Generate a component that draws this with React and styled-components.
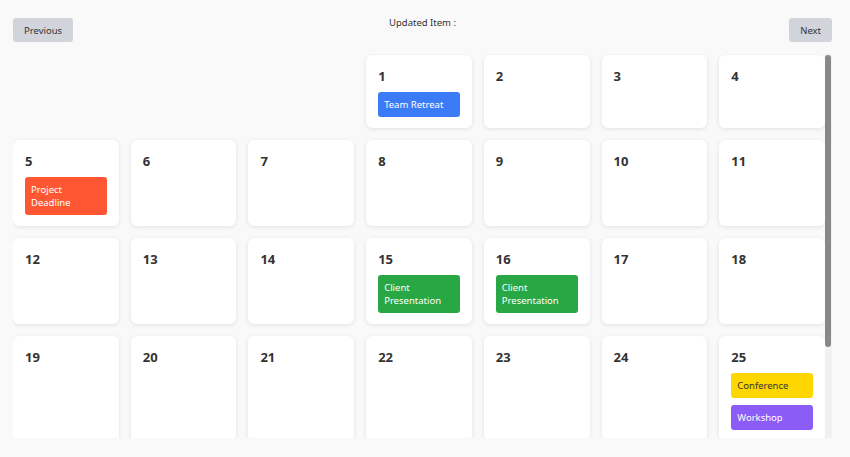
import React, { useState } from 'react';
import styled, { createGlobalStyle } from 'styled-components';

const events = {
  1: [{ title: 'Team Retreat', color: '#3b7cf6', text: '#fff' }],
  5: [{ title: 'Project Deadline', color: '#ff5733', text: '#fff' }],
  15: [{ title: 'Client Presentation', color: '#28a745', text: '#fff' }],
  16: [{ title: 'Client Presentation', color: '#28a745', text: '#fff' }],
  25: [
    { title: 'Conference', color: '#ffd700', text: '#333' },
    { title: 'Workshop', color: '#8b5cf6', text: '#fff' },
  ],
};

export default function App() {
  const [updated] = useState('');
  const offset = 3;
  const days = Array.from({ length: 31 }, (_, i) => i + 1);

  return (
    <>
      <GlobalStyle />
      <Page>
        <Header>
          <NavButton>Previous</NavButton>
          <Updated>Updated Item : {updated}</Updated>
          <NavButton end>Next</NavButton>
        </Header>
        <Body>
          <Scroller>
            <Grid>
              {Array.from({ length: offset }, (_, i) => (
                <Blank key={'b' + i} />
              ))}
              {days.map(day => (
                <DayCard key={day}>
                  <DayNumber>{day}</DayNumber>
                  {(events[day] || []).map((ev, i) => (
                    <Event key={i} bg={ev.color} fg={ev.text}>
                      {ev.title}
                    </Event>
                  ))}
                </DayCard>
              ))}
            </Grid>
          </Scroller>
          <ScrollTrack>
            <ScrollThumb />
          </ScrollTrack>
        </Body>
      </Page>
    </>
  );
}

const GlobalStyle = createGlobalStyle`
  body {
    margin: 0;
    background: #f9f9f9;
    font-family: "Noto Sans", "Open Sans", sans-serif;
    color: #333;
  }
`;

const Page = styled.div`
  padding: 0 18px 0 13px;
`;

const Header = styled.div`
  display: grid;
  grid-template-columns: 1fr auto 1fr;
  align-items: start;
  padding-top: 18px;
  margin-bottom: 12px;
`;

const NavButton = styled.button`
  justify-self: ${p => (p.end ? 'end' : 'start')};
  height: 24px;
  padding: 0 11px;
  border: none;
  border-radius: 3px;
  background: #d1d5db;
  color: #333;
  font-family: inherit;
  font-size: 9.5px;
  cursor: pointer;
`;

const Updated = styled.div`
  font-size: 9.5px;
  line-height: 10px;
  color: #333;
`;

const Body = styled.div`
  display: flex;
  height: 384px;
`;

const Scroller = styled.div`
  flex: 1;
  overflow: hidden;
`;

const ScrollTrack = styled.div`
  width: 7px;
  background: #f1f1f1;
  padding-top: 1px;
`;

const ScrollThumb = styled.div`
  width: 6px;
  height: 292px;
  border-radius: 3px;
  background: #888;
`;

const Grid = styled.div`
  display: grid;
  grid-template-columns: repeat(7, 1fr);
  gap: 12px 12px;
  padding: 1px 0 12px;
`;

const Blank = styled.div``;

const DayCard = styled.div`
  background: #fff;
  border-radius: 6px;
  box-shadow: 0 1px 4px rgba(0, 0, 0, 0.1);
  padding: 13px 12px 11px;
  min-height: 49px;
  display: flex;
  flex-direction: column;
  gap: 7px;
`;

const DayNumber = styled.div`
  font-size: 13px;
  font-weight: 700;
  line-height: 17px;
  color: #333;
`;

const Event = styled.div`
  background: ${p => p.bg};
  color: ${p => p.fg};
  border-radius: 3px;
  padding: 6px 6px;
  font-size: 9.5px;
  line-height: 13px;
`;
